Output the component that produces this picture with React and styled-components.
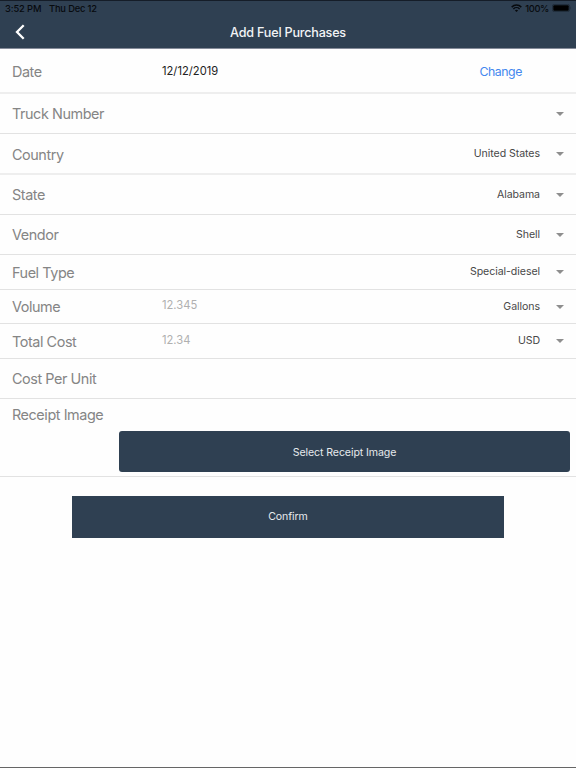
import React from "react";
import styled, { createGlobalStyle } from "styled-components";

const GlobalStyle = createGlobalStyle`
  * {
    box-sizing: border-box;
  }
  body {
    margin: 0;
    background-color: #ffffff;
    font-family: Inter, "Liberation Sans", sans-serif;
  }
`;

const Screen = styled.div`
  display: flex;
  flex-direction: column;
  width: 576px;
  height: 768px;
  overflow: hidden;
  background-color: #fefefe;
  border-bottom: 1px solid #666666;
`;

const Header = styled.header`
  height: 49px;
  background-color: #2f4052;
  border-top: 1px solid #151d28;
  border-bottom: 1px solid #858b99;
`;

const StatusBar = styled.div`
  display: flex;
  align-items: center;
  height: 14px;
  padding: 0 4px 0 5px;
  font-size: 9.3px;
  font-weight: 500;
  color: #070a0e;
`;

const StatusText = styled.span`
  width: ${(props) => props.$width};
  letter-spacing: ${(props) => props.$spacing || "-0.1px"};
  white-space: nowrap;
`;

const StatusIcons = styled.div`
  display: flex;
  align-items: center;
  gap: 3px;
  margin-left: auto;
`;

const NavBar = styled.div`
  display: grid;
  grid-template-columns: 40px 1fr 40px;
  align-items: center;
  height: 34px;
`;

const BackButton = styled.button`
  display: flex;
  padding: 0 0 0 14px;
  border: none;
  background: none;
`;

const Title = styled.h1`
  margin: 0;
  font-size: 12.6px;
  font-weight: 500;
  letter-spacing: -0.2px;
  text-align: center;
  color: #f2f4f6;
`;

const Row = styled.div`
  display: flex;
  align-items: center;
  height: ${(props) => props.$height}px;
  padding: 0 12px;
  border-bottom: ${(props) =>
    props.$soft ? "2px solid #eeeeee" : "1px solid #e2e2e2"};
`;

const Label = styled.div`
  width: 150px;
  padding-top: ${(props) => props.$top || 1}px;
  font-size: 14.4px;
  line-height: 18px;
  letter-spacing: -0.43px;
  color: #858585;
`;

const DateValue = styled.div`
  font-size: 11.2px;
  color: #222222;
`;

const Placeholder = styled.div`
  padding-bottom: 3px;
  font-size: 11.2px;
  color: #b0b0b0;
`;

const ChangeLink = styled.button`
  margin-left: auto;
  padding: 1px 42px 0 0;
  border: none;
  background: none;
  font-family: inherit;
  font-size: 12.3px;
  letter-spacing: -0.42px;
  color: #4488ee;
`;

const Select = styled.div`
  display: flex;
  align-items: center;
  gap: 16px;
  margin-left: auto;
  font-size: 10.6px;
  line-height: 14px;
  letter-spacing: -0.07px;
  color: #484848;
`;

const Caret = styled.svg`
  display: block;
  width: 8px;
  height: 4px;
  fill: #8e8e8e;
`;

const ReceiptSection = styled.div`
  display: flex;
  flex-direction: column;
  height: 78px;
  padding: 5px 6px 4px 12px;
  border-bottom: 1px solid #e2e2e2;
`;

const Button = styled.button`
  height: 42px;
  padding: 0;
  border: none;
  background-color: #2f4052;
  font-family: inherit;
  font-size: 10.6px;
  letter-spacing: -0.1px;
  color: #e6e9ec;
`;

const ReceiptButton = styled(Button)`
  width: 451px;
  margin: 6.5px 0 0 auto;
  padding-top: 3px;
  border-radius: 3px;
`;

const ConfirmButton = styled(Button)`
  width: 432px;
  margin: 18.5px auto 0;
`;

const fields = [
  { label: "Truck Number", value: "", height: 40 },
  { label: "Country", value: "United States", height: 41, soft: true },
  { label: "State", value: "Alabama", height: 40 },
  { label: "Vendor", value: "Shell", height: 40 },
  { label: "Fuel Type", value: "Special-diesel", height: 35 },
  { label: "Volume", placeholder: "12.345", value: "Gallons", height: 34 },
  { label: "Total Cost", placeholder: "12.34", value: "USD", height: 35 },
];

function WifiIcon() {
  return (
    <svg width="11" height="8" viewBox="0 0 11 8" fill="none" stroke="#070a0e">
      <path d="M0.7 3.1a6.8 6.8 0 0 1 9.6 0" strokeWidth="1.5" />
      <path d="M2.4 4.9a4.4 4.4 0 0 1 6.2 0" strokeWidth="1.4" />
      <path d="M5.5 8 3.9 6.4a2.3 2.3 0 0 1 3.2 0z" fill="#070a0e" stroke="none" />
    </svg>
  );
}

function BatteryIcon() {
  return (
    <svg width="20" height="8" viewBox="0 0 20 8">
      <rect x="0.4" y="0.4" width="17.2" height="7.2" rx="2" fill="none" stroke="#1d2835" strokeWidth="0.8" />
      <rect x="1.3" y="1.2" width="15.4" height="5.6" rx="1" fill="#000000" />
      <path d="M18.4 2.7q1.1 1.3 0 2.6z" fill="#1d2835" />
    </svg>
  );
}

function FieldRow({ label, placeholder, value, height, soft }) {
  return (
    <Row $height={height} $soft={soft}>
      <Label $top={soft ? 2 : 1}>{label}</Label>
      {placeholder && <Placeholder>{placeholder}</Placeholder>}
      <Select>
        {value}
        <Caret viewBox="0 0 8 4">
          <path d="M0 0h8L4 4z" />
        </Caret>
      </Select>
    </Row>
  );
}

function App() {
  return (
    <>
      <GlobalStyle />
      <Screen>
        <Header>
          <StatusBar>
            <StatusText $width="44px">3:52 PM</StatusText>
            <StatusText $spacing="-0.15px">Thu Dec 12</StatusText>
            <StatusIcons>
              <WifiIcon />
              <StatusText $spacing="-0.35px">100%</StatusText>
              <BatteryIcon />
            </StatusIcons>
          </StatusBar>
          <NavBar>
            <BackButton aria-label="Back">
              <svg width="12" height="16" viewBox="0 0 12 16" fill="none">
                <path d="M9.7 1.2 3 8l6.7 6.8" stroke="#ffffff" strokeWidth="2.3" />
              </svg>
            </BackButton>
            <Title>Add Fuel Purchases</Title>
          </NavBar>
        </Header>
        <Row $height={45} $soft>
          <Label $top={3}>Date</Label>
          <DateValue>12/12/2019</DateValue>
          <ChangeLink>Change</ChangeLink>
        </Row>
        {fields.map((field) => (
          <FieldRow key={field.label} {...field} />
        ))}
        <Row $height={40}>
          <Label>Cost Per Unit</Label>
        </Row>
        <ReceiptSection>
          <Label $top={2}>Receipt Image</Label>
          <ReceiptButton>Select Receipt Image</ReceiptButton>
        </ReceiptSection>
        <ConfirmButton>Confirm</ConfirmButton>
      </Screen>
    </>
  );
}

export default App;
